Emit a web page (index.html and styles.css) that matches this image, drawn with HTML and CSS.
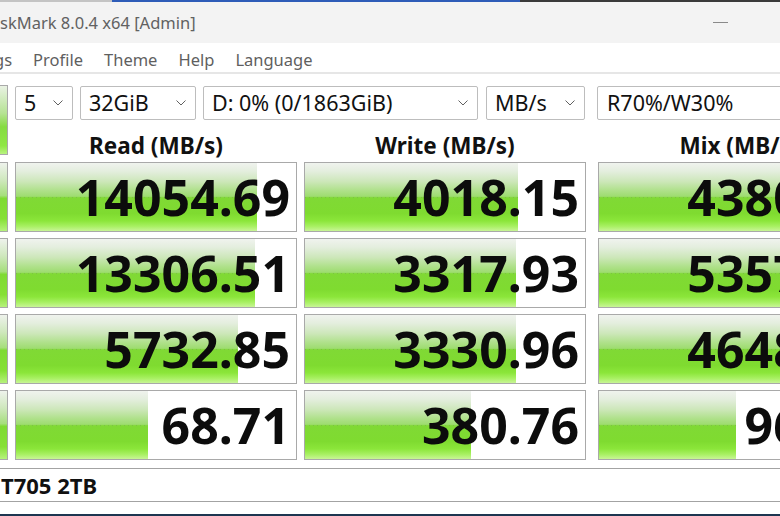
FILE: index.html
```html
<!DOCTYPE html>
<html lang="en">
<head>
    <meta charset="UTF-8">
    <meta name="viewport" content="width=device-width, initial-scale=1.0">
    <title>CrystalDiskMark</title>
    <link rel="stylesheet" href="styles.css">
</head>
<body>

<div class="screen-strip"></div>

<div class="titlebar">
    <span class="title">skMark 8.0.4 x64 [Admin]</span>
    <span class="minimize"></span>
</div>

<nav class="menubar">
    <span class="menu-item first">gs</span>
    <span class="menu-item">Profile</span>
    <span class="menu-item">Theme</span>
    <span class="menu-item">Help</span>
    <span class="menu-item">Language</span>
</nav>

<main class="main">
    <div class="top">
        <div class="all-btn"></div>
        <div class="top-right">
            <div class="toolbar">
                <div class="select w-count">5
                    <svg class="chev" width="10" height="6" viewBox="0 0 10 6"><polyline points="0.5,0.5 5,5 9.5,0.5" fill="none" stroke="#606060" stroke-width="1"/></svg>
                </div>
                <div class="select w-size">32GiB
                    <svg class="chev" width="10" height="6" viewBox="0 0 10 6"><polyline points="0.5,0.5 5,5 9.5,0.5" fill="none" stroke="#606060" stroke-width="1"/></svg>
                </div>
                <div class="select w-drive">D: 0% (0/1863GiB)
                    <svg class="chev" width="10" height="6" viewBox="0 0 10 6"><polyline points="0.5,0.5 5,5 9.5,0.5" fill="none" stroke="#606060" stroke-width="1"/></svg>
                </div>
                <div class="select w-unit">MB/s
                    <svg class="chev" width="10" height="6" viewBox="0 0 10 6"><polyline points="0.5,0.5 5,5 9.5,0.5" fill="none" stroke="#606060" stroke-width="1"/></svg>
                </div>
                <div class="select w-mix">R70%/W30%
                    <svg class="chev" width="10" height="6" viewBox="0 0 10 6"><polyline points="0.5,0.5 5,5 9.5,0.5" fill="none" stroke="#606060" stroke-width="1"/></svg>
                </div>
            </div>
            <div class="headers">
                <div class="head">Read (MB/s)</div>
                <div class="head">Write (MB/s)</div>
                <div class="head mix">Mix (MB/s)</div>
            </div>
        </div>
    </div>

    <div class="rows">
        <div class="row">
            <div class="side"></div>
            <div class="cell"><div class="bar" style="width:86%"></div><div class="val">14054.69</div></div>
            <div class="cell"><div class="bar" style="width:76%"></div><div class="val">4018.15</div></div>
            <div class="cell mix"><div class="bar" style="width:82%"></div><div class="val">4380.62</div></div>
        </div>
        <div class="row">
            <div class="side"></div>
            <div class="cell"><div class="bar" style="width:85.4%"></div><div class="val">13306.51</div></div>
            <div class="cell"><div class="bar" style="width:75.4%"></div><div class="val">3317.93</div></div>
            <div class="cell mix"><div class="bar" style="width:84%"></div><div class="val">5357.04</div></div>
        </div>
        <div class="row">
            <div class="side"></div>
            <div class="cell"><div class="bar" style="width:79.3%"></div><div class="val">5732.85</div></div>
            <div class="cell"><div class="bar" style="width:75.4%"></div><div class="val">3330.96</div></div>
            <div class="cell mix"><div class="bar" style="width:83%"></div><div class="val">4648.27</div></div>
        </div>
        <div class="row">
            <div class="side"></div>
            <div class="cell"><div class="bar" style="width:47%"></div><div class="val">68.71</div></div>
            <div class="cell"><div class="bar" style="width:59.3%"></div><div class="val">380.76</div></div>
            <div class="cell mix"><div class="bar" style="width:49%"></div><div class="val">96.45</div></div>
        </div>
    </div>

    <div class="comment">T705 2TB</div>
</main>

<div class="taskbar-strip"></div>

</body>
</html>
```

FILE: styles.css
```css
* {
  margin: 0;
  padding: 0;
  box-sizing: border-box;
}

body {
  width: 780px;
  height: 516px;
  overflow: hidden;
  background: #fff;
  font-family: "Noto Sans", "Open Sans", sans-serif;
  color: #111;
  display: flex;
  flex-direction: column;
}

/* bits of the desktop around the window */
.screen-strip {
  height: 2px;
  flex-shrink: 0;
  background: linear-gradient(to right, #c4c4c4 0 112px, #2e5cb8 112px 520px, #3a3a3a 520px);
}
.taskbar-strip {
  height: 2px;
  flex-shrink: 0;
  margin-top: auto;
  background: #1d3550;
}

/* window chrome */
.titlebar {
  height: 41px;
  flex-shrink: 0;
  background: #f3f3f3;
  display: flex;
  align-items: center;
  justify-content: space-between;
}
.title {
  font-size: 16.5px;
  color: #616161;
}
.minimize {
  width: 15px;
  height: 1px;
  background: #8a8a8a;
  margin-right: 52px;
}

.menubar {
  height: 31px;
  flex-shrink: 0;
  display: flex;
  align-items: center;
  gap: 21px;
  padding-top: 3px;
  border-bottom: 2px solid #e6e6e6;
  overflow: hidden;
}
.menu-item {
  font-size: 16.5px;
  color: #5f5f5f;
}
.menu-item.first {
  margin-left: -6px;
}

/* main panel */
.main {
  padding-top: 11px;
  flex-shrink: 0;
}

.top {
  display: flex;
  gap: 7px;
  align-items: flex-start;
}
.all-btn {
  width: 8px;
  height: 70px;
  flex-shrink: 0;
  border: 1px solid #a9a9a9;
  border-left: none;
  background: linear-gradient(to bottom, #e9f2e3 0%, #b6e394 40%, #86db42 60%, #8fe744 88%, #b9f381 100%);
}
.top-right {
  display: flex;
  flex-direction: column;
}

.toolbar {
  margin-top: 1px;
  display: flex;
  gap: 7px;
}
.select {
  height: 34px;
  flex-shrink: 0;
  border: 1px solid #bdbdbd;
  border-radius: 2px;
  background: #fff;
  font-size: 21.5px;
  line-height: 32px;
  padding-left: 8px;
  padding-right: 9px;
  display: flex;
  align-items: center;
  justify-content: space-between;
  color: #111;
}
.chev {
  flex-shrink: 0;
}
.w-count { width: 58px; }
.w-size { width: 116px; }
.w-drive { width: 275px; }
.w-unit { width: 99px; margin-left: 1px; }
.w-mix { width: 300px; margin-left: 5px; padding-left: 9px; }

.headers {
  height: 42px;
  display: flex;
  gap: 7px;
}
.head {
  width: 282px;
  flex-shrink: 0;
  text-align: center;
  font-size: 22.5px;
  font-weight: 700;
  line-height: 24px;
  padding-top: 14px;
  white-space: nowrap;
}
.head.mix {
  margin-left: 5px;
}

/* result grid */
.rows {
  display: flex;
  flex-direction: column;
  gap: 6px;
}
.row {
  display: flex;
  gap: 7px;
  height: 70px;
}
.side {
  width: 8px;
  flex-shrink: 0;
  border: 1px solid #a9a9a9;
  border-left: none;
  background: linear-gradient(to bottom, #eef2ec 0%, #cfe8bd 25%, #a6df7c 48%, #7fda33 52%, #86e036 82%, #b6f27c 100%);
}
.cell {
  width: 282px;
  flex-shrink: 0;
  border: 1px solid #a9a9a9;
  background: #fff;
  display: grid;
  overflow: hidden;
}
.cell.mix {
  margin-left: 5px;
}
.bar {
  grid-area: 1 / 1;
  height: 100%;
  background:
    repeating-linear-gradient(to right, rgba(110, 150, 80, 0.35) 0 1px, transparent 1px 4px) 0 50% / 100% 1px no-repeat,
    linear-gradient(to bottom,
      #f0f3ee 0%,
      #e4eede 12%,
      #cde7ba 27%,
      #b0e18c 40%,
      #9edc70 49%,
      #80d935 51%,
      #7fdb30 74%,
      #8be63a 85%,
      #a8f062 93%,
      #c8f596 100%);
}
.val {
  grid-area: 1 / 1;
  justify-self: end;
  font-size: 50px;
  font-weight: 700;
  line-height: 68px;
  padding-right: 6px;
  color: #0c0c0c;
  white-space: nowrap;
}

.comment {
  margin-top: 8px;
  height: 34px;
  border-top: 1px solid #a3a3a3;
  border-bottom: 1px solid #a3a3a3;
  font-size: 22px;
  font-weight: 700;
  line-height: 32px;
  padding-left: 1px;
}
```
